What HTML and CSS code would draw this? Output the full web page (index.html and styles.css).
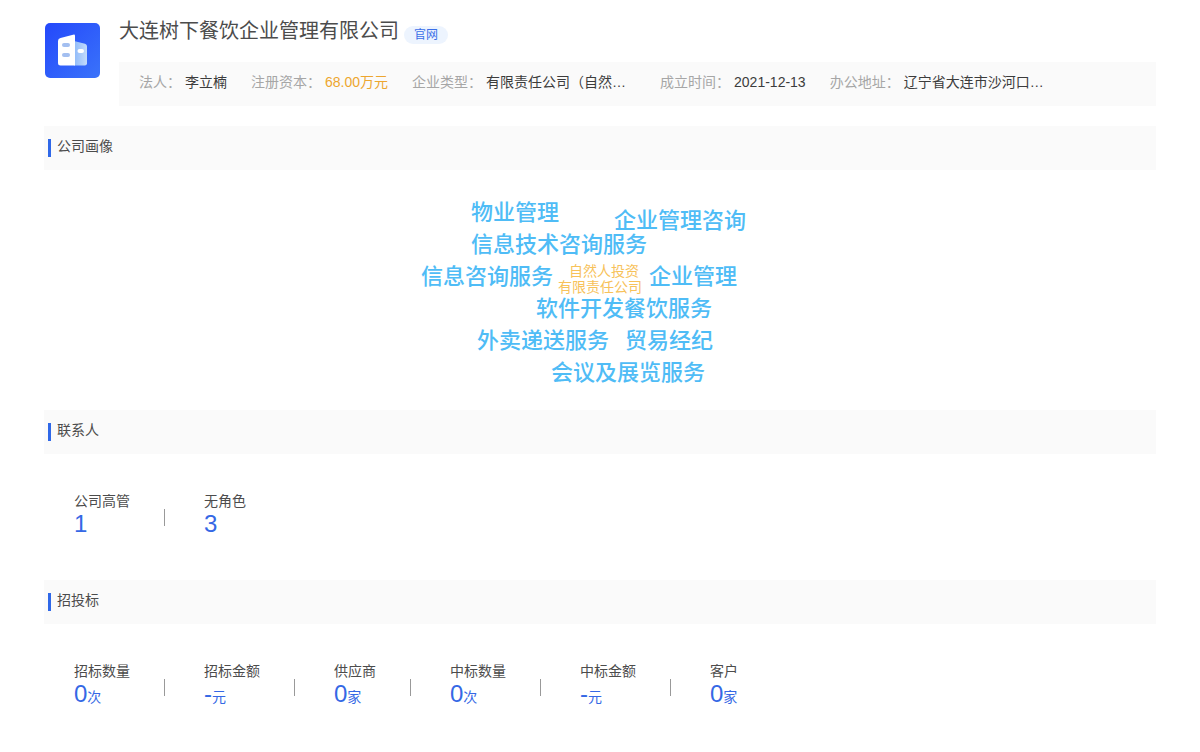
FILE: index.html
```html
<!DOCTYPE html>
<html lang="zh-CN">
<head>
<meta charset="utf-8">
<title>大连树下餐饮企业管理有限公司</title>
<link rel="stylesheet" href="styles.css">
</head>
<body>
<main class="page">
  <header class="company">
    <svg class="logo" viewBox="0 0 55 55" aria-hidden="true">
      <defs>
        <linearGradient id="tile" x1="0" y1="0" x2="1" y2="1">
          <stop offset="0" stop-color="#2448fb"/>
          <stop offset="1" stop-color="#3a73fa"/>
        </linearGradient>
        <linearGradient id="wing" x1="0" y1="0" x2="1" y2="0">
          <stop offset="0" stop-color="#8fbaf9"/>
          <stop offset="1" stop-color="#c3dbfb"/>
        </linearGradient>
      </defs>
      <rect width="55" height="55" rx="5" fill="url(#tile)"/>
      <path d="M29 18l11 2.800q2 .7 2 2.500v17q0 2.200-2.200 2.200H29z" fill="url(#wing)"/>
      <path d="M15.500 15L29 11.500q1 0 1 1v30H15.500q-2.500 0-2.500-2.500V18q0-2.300 2.500-3z" fill="#fff"/>
      <rect x="17" y="20" width="8" height="4" rx="2" fill="#a3bff0"/>
      <rect x="17" y="30" width="8" height="4" rx="2" fill="#a3bff0"/>
      <rect x="32.500" y="26" width="6.500" height="4" rx="2" fill="#fff"/>
    </svg>
    <div class="company-main">
      <div class="title-row">
        <h1 class="title">大连树下餐饮企业管理有限公司</h1>
        <a class="site-link" href="#">官网</a>
      </div>
      <dl class="facts">
        <div class="fact"><dt>法人：</dt><dd>李立楠</dd></div>
        <div class="fact"><dt>注册资本：</dt><dd class="money">68.00万元</dd></div>
        <div class="fact"><dt>企业类型：</dt><dd class="long">有限责任公司（自然…</dd></div>
        <div class="fact"><dt>成立时间：</dt><dd>2021-12-13</dd></div>
        <div class="fact"><dt>办公地址：</dt><dd class="long">辽宁省大连市沙河口…</dd></div>
      </dl>
    </div>
  </header>

  <section>
    <h2 class="section-title">公司画像</h2>
    <div class="cloud-wrap">
      <div class="cloud">
        <span class="word w1">物业管理</span>
        <span class="word w2">企业管理咨询</span>
        <span class="word w3">信息技术咨询服务</span>
        <span class="word w4">信息咨询服务</span>
        <span class="word small w5">自然人投资</span>
        <span class="word small w6">有限责任公司</span>
        <span class="word w7">企业管理</span>
        <span class="word w8">软件开发</span>
        <span class="word w9">餐饮服务</span>
        <span class="word w10">外卖递送服务</span>
        <span class="word w11">贸易经纪</span>
        <span class="word w12">会议及展览服务</span>
      </div>
    </div>
  </section>

  <section>
    <h2 class="section-title">联系人</h2>
    <ul class="stats">
      <li class="stat"><span>公司高管</span><b class="num">1</b></li>
      <li class="stat"><span>无角色</span><b class="num">3</b></li>
    </ul>
  </section>

  <section>
    <h2 class="section-title">招投标</h2>
    <ul class="stats">
      <li class="stat"><span>招标数量</span><b class="num">0<small>次</small></b></li>
      <li class="stat"><span>招标金额</span><b class="num">-<small>元</small></b></li>
      <li class="stat"><span>供应商</span><b class="num">0<small>家</small></b></li>
      <li class="stat"><span>中标数量</span><b class="num">0<small>次</small></b></li>
      <li class="stat"><span>中标金额</span><b class="num">-<small>元</small></b></li>
      <li class="stat"><span>客户</span><b class="num">0<small>家</small></b></li>
    </ul>
  </section>
</main>
</body>
</html>
```
FILE: styles.css
```css
* { box-sizing: border-box; margin: 0; padding: 0; }

body {
  background: #fff;
  color: #4c4c4c;
  font: 14px/20px "Liberation Sans", "Noto Sans CJK SC", sans-serif;
}

.page { padding: 16px 44px 0; }

.company {
  display: flex;
  gap: 19px;
  margin-bottom: 20px;
  padding-left: 1px;
}

.logo { flex: none; width: 55px; height: 55px; margin-top: 7px; }

.company-main { flex: 1; min-width: 0; }

.title-row { display: flex; align-items: flex-end; gap: 5px; height: 28px; }

.title { padding-top: 2px; font-size: 20px; line-height: 26px; font-weight: 400; }

.site-link {
  padding: 0 10px;
  border-radius: 9px;
  background: #edf4fe;
  color: #3b6fe8;
  font-size: 12px;
  line-height: 18px;
  text-decoration: none;
}

.facts {
  display: flex;
  flex-wrap: wrap;
  gap: 0 24px;
  margin-top: 18px;
  padding: 10px 20px 14px;
  background: #fafafa;
}

.fact { display: flex; gap: 4px; }
.fact dt { color: #a6a6a6; }
.fact dd { color: #3c3c3c; white-space: nowrap; }
.fact .money { color: #eda62f; }
.fact .long { width: 150px; }

.section-title {
  display: flex;
  align-items: center;
  gap: 6px;
  padding: 10px 4px 14px;
  background: #fafafa;
  font-size: 14px;
  line-height: 20px;
  font-weight: 400;
}

.section-title::before {
  content: "";
  width: 3px;
  height: 18px;
  margin-top: 3px;
  margin-bottom: -1px;
  background: #2f68e8;
}

.cloud-wrap { display: flex; justify-content: center; padding: 24px 0; }

.cloud { position: relative; width: 360px; height: 192px; }

.word {
  position: absolute;
  color: #4fbcf6;
  font-size: 22px;
  line-height: 32px;
  font-weight: 500;
  white-space: nowrap;
}

.small { color: #f7c25a; font-size: 14px; line-height: 16px; font-weight: 400; }

.w1 { left: 51px; top: 3px; }
.w2 { left: 194px; top: 11px; }
.w3 { left: 51px; top: 35px; }
.w4 { left: 1px; top: 67px; }
.w5 { left: 149px; top: 69px; }
.w6 { left: 138px; top: 85px; }
.w7 { left: 229px; top: 67px; }
.w8 { left: 116px; top: 99px; }
.w9 { left: 204px; top: 99px; }
.w10 { left: 57px; top: 131px; }
.w11 { left: 205px; top: 131px; }
.w12 { left: 131px; top: 163px; }

.stats {
  display: flex;
  flex-wrap: wrap;
  padding: 37px 30px 43px;
  list-style: none;
}

.stat { display: flex; flex-direction: column; position: relative; }

.stat:not(:last-child) { padding-right: 34px; margin-right: 39px; border-right: 1px solid transparent; }

.stat:not(:last-child)::after {
  content: "";
  position: absolute;
  right: -1px;
  top: 18px;
  width: 1px;
  height: 17px;
  background: #999;
}

.num {
  color: #3568e5;
  font-size: 24px;
  line-height: 26px;
  height: 26px;
  font-weight: 400;
}

.num small { font-size: 14px; }
```
